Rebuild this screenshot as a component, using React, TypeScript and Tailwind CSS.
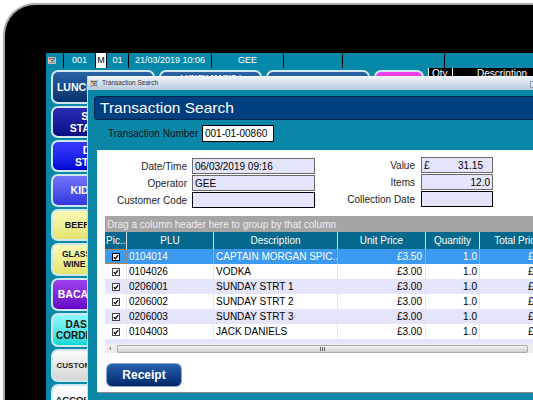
import React from "react";

function WinIcon() {
  return (
    <svg width="8" height="7" viewBox="0 0 8 7" className="block">
      <rect x="0" y="0" width="8" height="7" fill="#f4f4f4" stroke="#666" strokeWidth="0.6" />
      <rect x="1" y="1" width="2" height="1.5" fill="#e03030" />
      <rect x="3" y="1" width="2" height="1.5" fill="#30a030" />
      <rect x="5" y="1" width="2" height="1.5" fill="#3060e0" />
      <rect x="1" y="3" width="2" height="1.5" fill="#e0c030" />
      <rect x="3" y="3" width="2" height="1.5" fill="#a030c0" />
      <rect x="5" y="3" width="2" height="1.5" fill="#30b0c0" />
      <rect x="1" y="5" width="6" height="1" fill="#888" />
    </svg>
  );
}

function Check({ sel }: { sel?: boolean }) {
  return (
    <svg width="8" height="8" viewBox="0 0 8 8" className="block">
      <rect x="0.5" y="0.5" width="7" height="7" fill="#fff" stroke={sel ? "#000" : "#444"} strokeWidth="1" />
      <path d="M1.8 4.1 L3.3 5.7 L6.2 2.2" fill="none" stroke="#000" strokeWidth="1.3" />
    </svg>
  );
}

type Btn = { t: string; h: string; c: string; tc: string; fs: string; al?: string };

const leftBtns: Btn[] = [
  { t: "LUNCH SPECIALS", h: "h-[34px]", c: "from-[#2a64a6] to-[#07306a]", tc: "text-white", fs: "text-[10.5px]" },
  { t: "SUNDAY\nSTARTERS &", h: "h-[32px]", c: "from-[#2c2cb4] to-[#0b0b84]", tc: "text-white", fs: "text-[10.5px]" },
  { t: "DINNER\nSTARTERS", h: "h-[32px]", c: "from-[#3a3aff] to-[#0000d6]", tc: "text-white", fs: "text-[10.5px]" },
  { t: "KIDS MEALS", h: "h-[33px]", c: "from-[#7474f6] to-[#3434de]", tc: "text-white", fs: "text-[10.5px]" },
  { t: "BEERS & CIDERS", h: "h-[32px]", c: "from-[#fbfbb8] to-[#e4e46c]", tc: "text-[#111]", fs: "text-[9px]" },
  { t: "GLASS HOUSE RED\nWINE 175ML 250ML", h: "h-[33px]", c: "from-[#fbfbb8] to-[#e4e46c]", tc: "text-[#111]", fs: "text-[8.5px]" },
  { t: "BACARDI SPICED", h: "h-[33px]", c: "from-[#9c40ea] to-[#6600c6]", tc: "text-white", fs: "text-[10.5px]" },
  { t: "DASH MIXERS /\nCORDIALS & SODA", h: "h-[34px]", c: "from-[#8cfafa] to-[#00d8d8]", tc: "text-[#111]", fs: "text-[10px]" },
  { t: "CUSTOMER ACCOUNTS", h: "h-[33px]", c: "from-[#fcfcfc] to-[#d6d6d6]", tc: "text-[#222]", fs: "text-[8px]" },
  { t: "ACCOUNT PAYMENT", h: "h-[33px]", c: "from-[#ffffff] to-[#ececec]", tc: "text-[#111]", fs: "text-[9.5px]" },
];

function PosButton({ b, w }: { b: Btn; w: string }) {
  return (
    <div
      className={`${w} ${b.h} shrink-0 rounded-[7px] border-2 border-[#cfe8ef] bg-linear-to-b ${b.c} ${b.tc} ${b.fs} font-bold flex ${b.al ?? "items-center"} justify-center text-center leading-[1.15] whitespace-pre overflow-hidden`}
    >
      {b.t}
    </div>
  );
}

const cols = [
  { w: "w-[22px]", h: "Pic..", ha: "text-left pl-[1px]" },
  { w: "w-[87px]", h: "PLU", ha: "text-center" },
  { w: "w-[124px]", h: "Description", ha: "text-center" },
  { w: "w-[88px]", h: "Unit Price", ha: "text-center" },
  { w: "w-[54px]", h: "Quantity", ha: "text-center" },
  { w: "w-[76px]", h: "Total Price", ha: "text-center" },
];

const rows = [
  { plu: "0104014", d: "CAPTAIN MORGAN SPIC..", p: "£3.50" },
  { plu: "0104026", d: "VODKA", p: "£3.00" },
  { plu: "0206001", d: "SUNDAY STRT 1", p: "£3.00" },
  { plu: "0206002", d: "SUNDAY STRT 2", p: "£3.00" },
  { plu: "0206003", d: "SUNDAY STRT 3", p: "£3.00" },
  { plu: "0104003", d: "JACK DANIELS", p: "£3.00" },
];

function Field({ label, value, right, align, black }: { label: string; value?: string; right?: boolean; align?: string; black?: boolean }) {
  return (
    <div className="flex items-center h-[16px]">
      <div className={`${right ? "w-[106px] pr-[6px]" : "w-[95px] pr-[5px]"} text-right text-[#222] whitespace-nowrap`}>{label}</div>
      <div
        className={`${right ? "w-[72px]" : "w-[123px]"} h-[16px] bg-[#e4e4fb] border ${black ? "border-black" : "border-[#6a6a6a]"} flex items-center px-[2px] text-black ${align ?? ""}`}
      >
        {value}
      </div>
    </div>
  );
}

function Dialog() {
  return (
    <div className="absolute left-[41px] top-[23px] w-[560px] h-[400px] border-l border-[#c6d8ea] bg-[#0a86a6]">
      {/* title bar */}
      <div className="relative h-[14px] border-t border-[#f4f8fc] bg-linear-to-b from-[#eef3fa] to-[#b6cae2] flex items-center pl-[2px]">
        <WinIcon />
        <span className="ml-[4px] text-[6.5px] text-[#303030] leading-none">Transaction Search</span>
        <div className="absolute left-[442px] top-[4px] w-[6px] h-[7px] border border-[#8a9aae] bg-[#dfe6ef]" />
      </div>
      {/* body */}
      <div className="pt-[6px] pl-[6px]">
        <div className="h-[24px] rounded-l-[3px] bg-[#003f7f] border border-[#00254d] flex items-center pl-[5px] text-white text-[15.5px] leading-none">
          Transaction Search
        </div>
      </div>
      <div className="flex items-center mt-[5px] pl-[20px] h-[17px]">
        <div className="w-[94px] text-[10px] text-[#111]">Transaction Number</div>
        <div className="w-[72px] h-[17px] bg-white border border-black flex items-center px-[2px] text-[10px] text-black">001-01-00860</div>
      </div>
      <div className="ml-[9px] mt-[8px] h-[243px] bg-white border-b border-[#8a8a8a] text-[10px]">
        {/* form */}
        <div className="flex pt-[8px]">
          <div className="flex flex-col gap-[1px]">
            <Field label="Date/Time" value="06/03/2019 09:16" />
            <Field label="Operator" value="GEE" />
            <Field label="Customer Code" black />
          </div>
          <div className="flex flex-col gap-[1px] -mt-[1px]">
            <div className="flex items-center h-[16px]">
              <div className="w-[106px] pr-[6px] text-right text-[#222]">Value</div>
              <div className="w-[72px] h-[16px] bg-[#e4e4fb] border border-[#6a6a6a] flex items-center justify-between pl-[2px] pr-[9px] text-black">
                <span>£</span>
                <span>31.15</span>
              </div>
            </div>
            <Field label="Items" value="12.0" right align="justify-end" />
            <Field label="Collection Date" right black />
          </div>
        </div>
        {/* grid */}
        <div className="ml-[8px] mt-[8px]">
          <div className="h-[16px] bg-[#a5a5a5] text-[#ededed] flex items-center pl-[2px] whitespace-nowrap">
            Drag a column header here to group by that column
          </div>
          <div className="flex h-[17px] bg-[#04698c] text-white">
            {cols.map((c) => (
              <div key={c.h} className={`${c.w} shrink-0 border-r border-[#d4e6ee] ${c.ha} leading-[17px] whitespace-nowrap overflow-hidden`}>
                {c.h}
              </div>
            ))}
          </div>
          {rows.map((r, i) => {
            const sel = i === 0;
            const bg = sel ? "bg-[#3b9af0] text-white" : i % 2 === 0 ? "bg-[#e4e4fa] text-black" : "bg-white text-black";
            const bd = sel ? "border-[#6fb4f2]" : "border-[#e6e6e6]";
            return (
              <div key={r.plu} className={`flex h-[15px] ${bg} leading-[15px] whitespace-nowrap`}>
                <div className={`w-[22px] shrink-0 border-r ${bd} flex items-center justify-center ${sel ? "border border-dotted border-[#c8884c]" : ""}`}>
                  <Check sel={sel} />
                </div>
                <div className={`w-[87px] shrink-0 border-r ${bd} pl-[2px]`}>{r.plu}</div>
                <div className={`w-[124px] shrink-0 border-r ${bd} pl-[2px] overflow-hidden`}>{r.d}</div>
                <div className={`w-[88px] shrink-0 border-r ${bd} text-right pr-[3px]`}>{r.p}</div>
                <div className={`w-[54px] shrink-0 border-r ${bd} text-right pr-[2px]`}>1.0</div>
                <div className={`w-[76px] shrink-0 text-right pr-[3px]`}>{r.p}</div>
              </div>
            );
          })}
          <div className="h-[5px] bg-[#e4e4fa]" />
          <div className="h-[9px] bg-[#ededed] flex items-center">
            <svg width="12" height="9" viewBox="0 0 12 9" className="block shrink-0">
              <path d="M4 4.5 L6 3 L6 6 Z" fill="#777" />
            </svg>
            <div className="w-[411px] h-[8px] rounded-[2px] border border-[#a9a9a9] bg-linear-to-b from-[#f6f6f6] to-[#cfcfcf] flex items-center justify-center gap-[1px]">
              <div className="w-px h-[4px] bg-[#666]" />
              <div className="w-px h-[4px] bg-[#666]" />
              <div className="w-px h-[4px] bg-[#666]" />
            </div>
          </div>
        </div>
        {/* receipt */}
        <div className="ml-[9px] mt-[10px] w-[76px] h-[24px] rounded-[6px] border border-[#8aa6cc] bg-linear-to-b from-[#2a62b0] to-[#02286a] flex items-center justify-center text-white font-bold text-[12px]">
          Receipt
        </div>
      </div>
    </div>
  );
}

function Screen() {
  return (
    <div className="relative w-[600px] h-[400px] bg-[#0a88a8] overflow-hidden">
      {/* status bar */}
      <div className="flex h-[15px] bg-[#0588aa] text-white text-[9px] items-center leading-none">
        <div className="w-[17px] h-full flex items-center pl-[2px]">
          <WinIcon />
        </div>
        <div className="w-[32px] h-full border-l border-black flex items-center justify-center">001</div>
        <div className="w-[12px] h-full border-x border-black bg-white text-black flex items-center justify-center">M</div>
        <div className="w-[21px] h-full flex items-center justify-center">01</div>
        <div className="w-[83px] h-full border-l border-black flex items-center justify-center">21/03/2019 10:06</div>
        <div className="w-[72px] h-full border-l border-black flex items-center justify-center">GEE</div>
        <div className="w-[59px] h-full border-l border-black" />
        <div className="w-[102px] h-full border-l border-black" />
        <div className="flex-1 h-full border-l border-black" />
      </div>
      {/* main */}
      <div className="flex pl-[5px] pt-[2px]">
        <div className="flex flex-col gap-[2px]">
          {leftBtns.map((b) => (
            <PosButton key={b.t} b={b} w="w-[104px]" />
          ))}
        </div>
        <div className="flex ml-[4px] gap-[4px] items-start">
          <PosButton w="w-[103px]" b={{ t: "LUNCH MAINS /\nGRILLS", h: "h-[34px]", c: "from-[#2a64a6] to-[#07306a]", tc: "text-white", fs: "text-[8px]", al: "items-start pt-[1px]" }} />
          <PosButton w="w-[104px]" b={{ t: "SUNDAY MAINS", h: "h-[34px]", c: "from-[#2a64a6] to-[#07306a]", tc: "text-white", fs: "text-[8px]" }} />
          <PosButton w="w-[50px]" b={{ t: "SPIRITS", h: "h-[34px]", c: "from-[#f040f0] to-[#c800c8]", tc: "text-white", fs: "text-[8px]" }} />
          <div className="-mt-[2px] w-[120px] h-[40px] bg-black border-l border-white flex text-white text-[10px] leading-[12px]">
            <div className="w-[24px] pl-[3px] border-r border-white">Qty</div>
            <div className="pl-[24px]">Description</div>
          </div>
        </div>
      </div>
      <Dialog />
    </div>
  );
}

export default function App() {
  return (
    <div className="w-[533px] h-[400px] overflow-hidden bg-white font-['Liberation_Sans',Arial,sans-serif]">
      <div className="ml-[3px] mt-[3px] w-[620px] h-[460px] rounded-tl-[32px] border-t-2 border-l-2 border-[#a9a9a9] bg-black pl-[41px] pt-[48px]">
        <Screen />
      </div>
    </div>
  );
}
